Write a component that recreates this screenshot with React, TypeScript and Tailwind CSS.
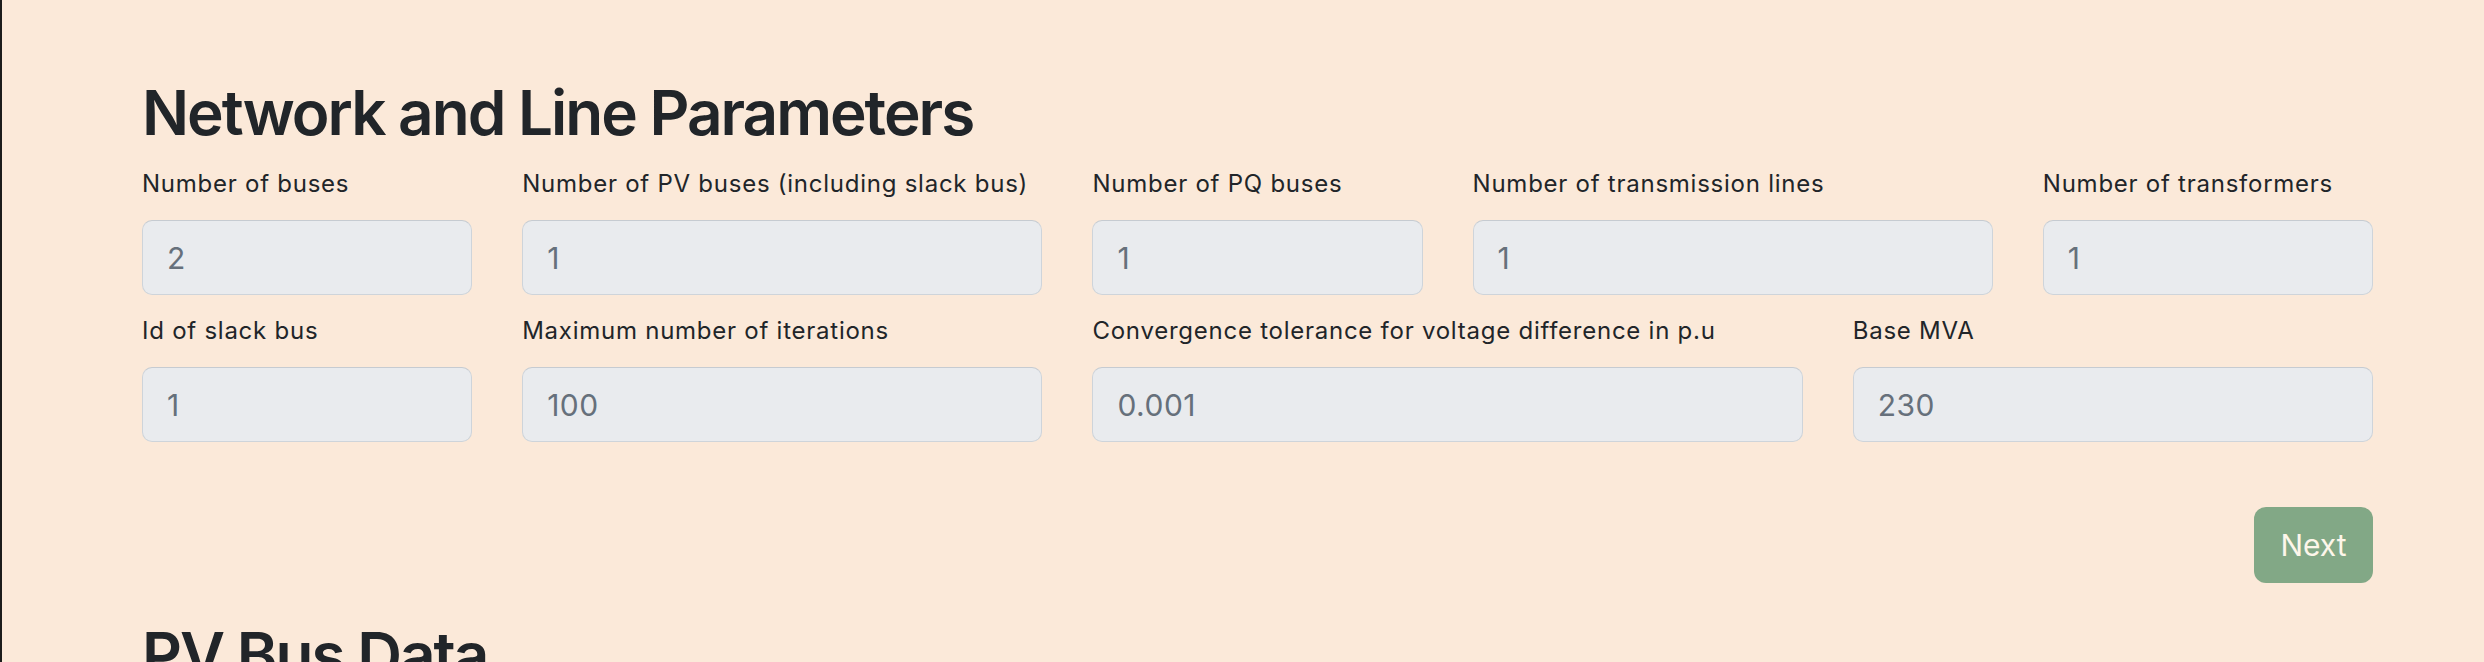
import React from "react";

interface Field {
  label: string;
  value: string;
  span: string;
}

const rowOne: Field[] = [
  { label: "Number of buses", value: "2", span: "col-span-2" },
  { label: "Number of PV buses (including slack bus)", value: "1", span: "col-span-3" },
  { label: "Number of PQ buses", value: "1", span: "col-span-2" },
  { label: "Number of transmission lines", value: "1", span: "col-span-3" },
  { label: "Number of transformers", value: "1", span: "col-span-2" },
];

const rowTwo: Field[] = [
  { label: "Id of slack bus", value: "1", span: "col-span-2" },
  { label: "Maximum number of iterations", value: "100", span: "col-span-3" },
  { label: "Convergence tolerance for voltage difference in p.u", value: "0.001", span: "col-span-4" },
  { label: "Base MVA", value: "230", span: "col-span-3" },
];

const FieldBox: React.FC<{ field: Field }> = ({ field }) => (
  <div className={field.span}>
    <label className="block text-[24px] leading-[36px] tracking-[0.75px] text-[#212529] mb-[18px] whitespace-nowrap">
      {field.label}
    </label>
    <input
      readOnly
      value={field.value}
      className="block w-full h-[75px] px-[24px] text-[30px] tracking-[0.5px] text-[#66707b] bg-[#e9ebee] border-[1.5px] border-[#ced4da] border-t-[#c6cbd1] rounded-[10px] outline-none"
    />
  </div>
);

export default function App() {
  return (
    <div
      className="h-[662px] overflow-hidden bg-[#fbe9d9] border-l-2 border-[#1c1c1c]"
      style={{ fontFamily: "Inter, 'Noto Sans', sans-serif" }}
    >
      <div className="pl-[140px] pt-[76px] w-[2371px]">
        <h1 className="text-[62px] leading-[74px] font-semibold text-[#212529] tracking-[-2px]">
          Network and Line Parameters
        </h1>

        <div className="grid grid-cols-12 gap-x-[50px] gap-y-[18px] mt-[16px]">
          {rowOne.map((f, i) => (
            <FieldBox key={"a" + i} field={f} />
          ))}
          {rowTwo.map((f, i) => (
            <FieldBox key={"b" + i} field={f} />
          ))}
        </div>

        <div className="flex justify-end mt-[65px]">
          <button className="h-[76px] w-[119px] rounded-[12px] bg-[#82a886] text-[#fdf6ea] text-[30px]">
            Next
          </button>
        </div>

        <h1 className="mt-[35px] text-[62px] leading-[74px] font-semibold text-[#212529] tracking-[-2px]">
          PV Bus Data
        </h1>
      </div>
    </div>
  );
}
